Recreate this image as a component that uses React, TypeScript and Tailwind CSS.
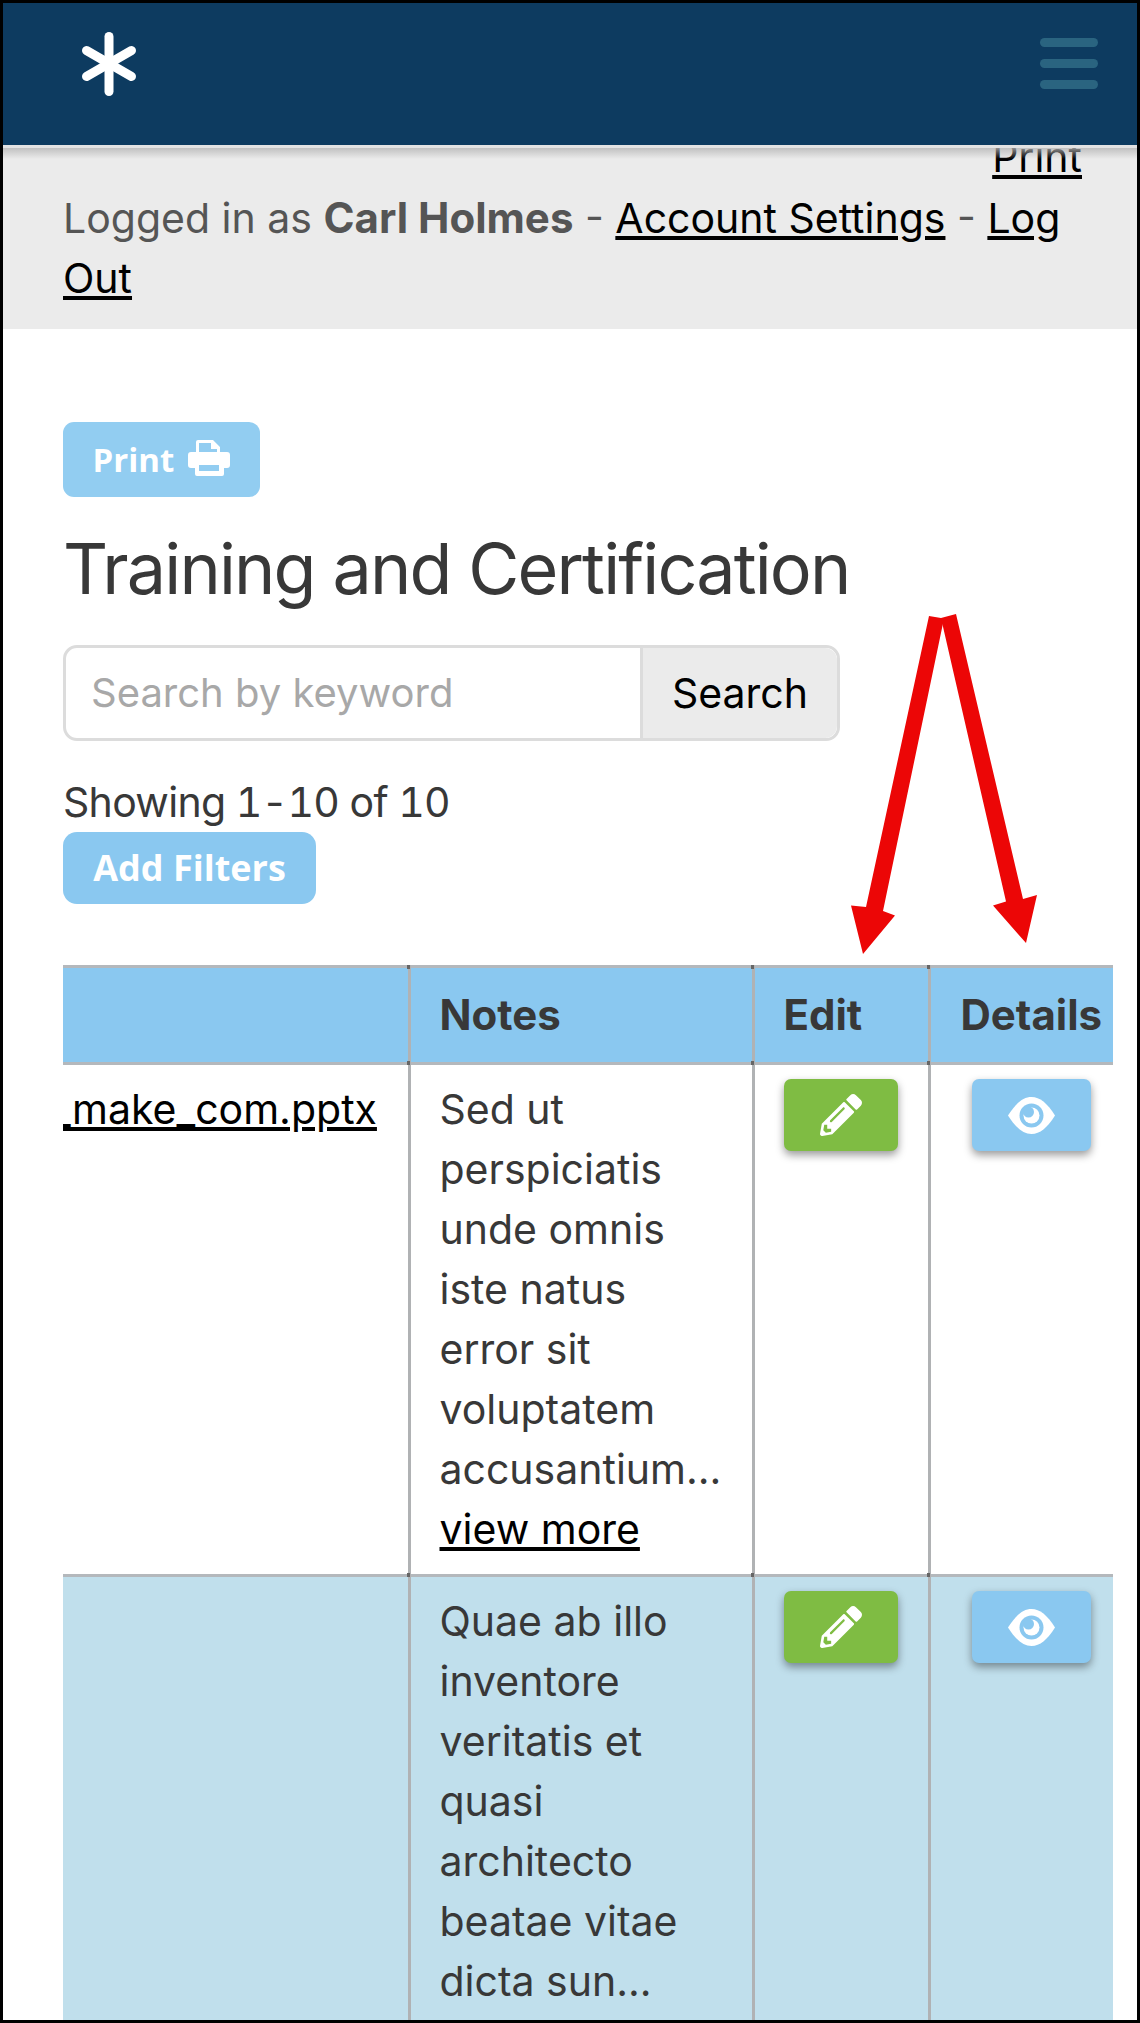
import { FaPencilAlt } from "react-icons/fa";

function EyeIcon() {
    return (
        <svg viewBox="0 0 47 37" className="h-[37px] w-[47px]">
            <path d="M0 18.5C8 6 15 0 23.5 0S39 6 47 18.5C39 31 32 37 23.5 37S8 31 0 18.5Z" fill="#fff" />
            <circle cx="23.5" cy="18.5" r="12" fill="#8ac8f0" />
            <circle cx="23.5" cy="18.5" r="8" fill="#fff" />
            <circle cx="20.5" cy="15" r="5.5" fill="#8ac8f0" />
        </svg>
    );
}

function PrinterIcon() {
    return (
        <svg viewBox="0 0 42 36" className="-mt-[3px] h-[36px] w-[42px]">
            <path d="M8 14V2a2 2 0 0 1 2-2h15l7 7v7h-3V9h-6V3H11v11Z" fill="#fff" />
            <path d="M3 12h36a3 3 0 0 1 3 3v10a3 3 0 0 1-3 3h-3v6a2 2 0 0 1-2 2H9a2 2 0 0 1-2-2v-6H3a3 3 0 0 1-3-3V15a3 3 0 0 1 3-3Z" fill="#fff" />
            <rect x="11" y="25" width="20" height="6" fill="#92cdf1" />
        </svg>
    );
}

function Asterisk() {
    return (
        <svg viewBox="0 0 58 64" className="h-[64px] w-[58px]">
            <g stroke="#fff" strokeWidth="9" strokeLinecap="round">
                <path d="M29 4.5v55" />
                <path d="M6.5 18.5l45 26" />
                <path d="M51.5 18.5l-45 26" />
            </g>
            <circle cx="29" cy="32" r="8" fill="#fff" />
        </svg>
    );
}

function Arrows() {
    return (
        <svg viewBox="0 0 1140 2023" className="pointer-events-none absolute -left-[3px] -top-[3px] h-[2023px] w-[1140px]">
            <polygon points="929,616 944,618.5 883,911 895,915.6 863,954 851,905.6 866,907" fill="#ec0606" />
            <polygon points="941,618 956,614 1023,899 1037,895 1026,943 993,905.6 1006,901.5" fill="#ec0606" />
        </svg>
    );
}

// small dark mark where the grid lines cross
function Joint({ top }: { top?: boolean }) {
    return (
        <span
            className={`absolute -right-[2px] h-[4px] w-[3px] bg-[#666] ${top ? "-top-[3px]" : "-bottom-[3px]"}`}
        />
    );
}

const rows = [
    {
        file: "_make_com.pptx",
        bg: "bg-white",
        notes: ["Sed ut", "perspiciatis", "unde omnis", "iste natus", "error sit", "voluptatem", "accusantium..."],
        more: true,
        height: "h-[512px]",
    },
    {
        file: "",
        bg: "bg-[#c0dfec]",
        notes: ["Quae ab illo", "inventore", "veritatis et", "quasi", "architecto", "beatae vitae", "dicta sun..."],
        more: false,
        height: "h-[460px]",
    },
];

export default function App() {
    return (
        <div className="relative h-[2023px] w-[1140px] overflow-hidden border-[3px] border-black bg-white font-['Inter',sans-serif] text-[41px] leading-[60px] text-[#383838]">
            {/* Top bar */}
            <header className="relative z-10 flex h-[142px] items-start justify-between bg-[#0d3b60] pl-[77px] pr-[39px] pt-[29px]">
                <Asterisk />
                <div className="flex w-[58px] flex-col gap-[12px] pt-[6px]">
                    <span className="h-[9px] rounded-full bg-[#2a6480]" />
                    <span className="h-[9px] rounded-full bg-[#2a6480]" />
                    <span className="h-[9px] rounded-full bg-[#2a6480]" />
                </div>
            </header>

            {/* Account strip */}
            <div className="relative h-[184px] overflow-hidden bg-[#ebebeb] px-[60px] text-[#555]">
                <div className="absolute inset-x-0 top-0 z-10 h-[14px] bg-gradient-to-b from-[#b5b5b5] to-transparent" />
                <div className="absolute inset-x-0 top-0 z-10 h-[3px] bg-[#e3e3e3]" />
                <div className="-mt-[18px] text-right">
                    <a className="mr-[-5px] text-black underline">Print</a>
                </div>
                <p className="mt-[1px]">
                    Logged in as <b className="text-[42px] font-bold">Carl Holmes</b> - <a className="text-black underline">Account Settings</a> - <a className="text-black underline">Log Out</a>
                </p>
            </div>

            {/* Main content */}
            <main className="pl-[60px]">
                <button className="mt-[93px] flex h-[75px] w-[197px] items-center justify-center gap-[14px] rounded-[11px] bg-[#92cdf1] font-['Open_Sans',sans-serif] text-[33px] font-bold text-white">
                    Print <PrinterIcon />
                </button>

                <h1 className="mt-[32px] text-[70px] leading-[80px] font-normal tracking-[-1.85px] text-[#383838]">Training and Certification</h1>

                <div className="mt-[36px] flex h-[96px] w-[777px] rounded-[14px] border-[3px] border-[#dcdcdc]">
                    <input
                        placeholder="Search by keyword"
                        className="w-[574px] rounded-l-[12px] px-[25px] text-[40px] outline-none placeholder:text-[#a8a8a8]"
                    />
                    <button className="flex-1 rounded-r-[12px] border-l-[3px] border-[#dcdcdc] bg-[#ebebeb] text-black">Search</button>
                </div>

                <p className="mt-[32px] leading-[59px] tabular-nums tracking-[-0.7px]">Showing 1-10 of 10</p>
                <button className="flex h-[72px] w-[253px] items-center justify-center rounded-[14px] bg-[#8ac8f0] font-['Open_Sans',sans-serif] text-[36px] font-bold text-white">
                    Add Filters
                </button>

                {/* Table, scrolled sideways so the first column is cut off */}
                <div className="mt-[61px] w-[1050px] overflow-hidden">
                    <table className="w-[1050px] table-fixed border-collapse">
                        <colgroup>
                            <col className="w-[346px]" />
                            <col className="w-[344px]" />
                            <col className="w-[176px]" />
                            <col className="w-[184px]" />
                        </colgroup>
                        <thead>
                            <tr className="h-[97px] border-y-[3px] border-[#b4b8bc] bg-[#8ac8f0] text-left text-[42px] font-bold">
                                <th className="relative border-r-[3px] border-[#b0b2b4]"><Joint top /><Joint /></th>
                                <th className="relative border-r-[3px] border-[#b0b2b4] pl-[29px] font-bold">Notes<Joint top /><Joint /></th>
                                <th className="relative border-r-[3px] border-[#b0b2b4] pl-[29px] font-bold">Edit<Joint top /><Joint /></th>
                                <th className="whitespace-nowrap pl-[30px] font-bold">Details</th>
                            </tr>
                        </thead>
                        <tbody>
                            {rows.map((row) => (
                                <tr key={row.notes[0]} className={`${row.bg} ${row.height} border-b-[3px] border-[#b4b8bc] align-top`}>
                                    <td className="relative border-r-[3px] border-[#b0b2b4] pt-[14px]">
                                        <a className="-ml-[11px] inline-block text-black underline">{row.file}</a>
                                        <Joint />
                                    </td>
                                    <td className="relative border-r-[3px] border-[#b0b2b4] pl-[29px] pt-[14px]">
                                        {row.notes.map((line) => (
                                            <div key={line}>{line}</div>
                                        ))}
                                        {row.more && <a className="text-black underline">view more</a>}
                                        <Joint />
                                    </td>
                                    <td className="relative border-r-[3px] border-[#b0b2b4] pl-[29px] pt-[14px]">
                                        <button className="flex h-[72px] w-[114px] items-center justify-center rounded-[7px] bg-[#7fbc43] text-white shadow-[0_4px_8px_rgba(0,0,0,0.4)]">
                                            <FaPencilAlt className="h-[42px] w-[42px]" />
                                        </button>
                                        <Joint />
                                    </td>
                                    <td className="pl-[41px] pt-[14px]">
                                        <button className="flex h-[72px] w-[119px] items-center justify-center rounded-[7px] bg-[#8ac8f0] shadow-[0_4px_8px_rgba(0,0,0,0.4)]">
                                            <EyeIcon />
                                        </button>
                                    </td>
                                </tr>
                            ))}
                        </tbody>
                    </table>
                </div>
            </main>

            <Arrows />
        </div>
    );
}
